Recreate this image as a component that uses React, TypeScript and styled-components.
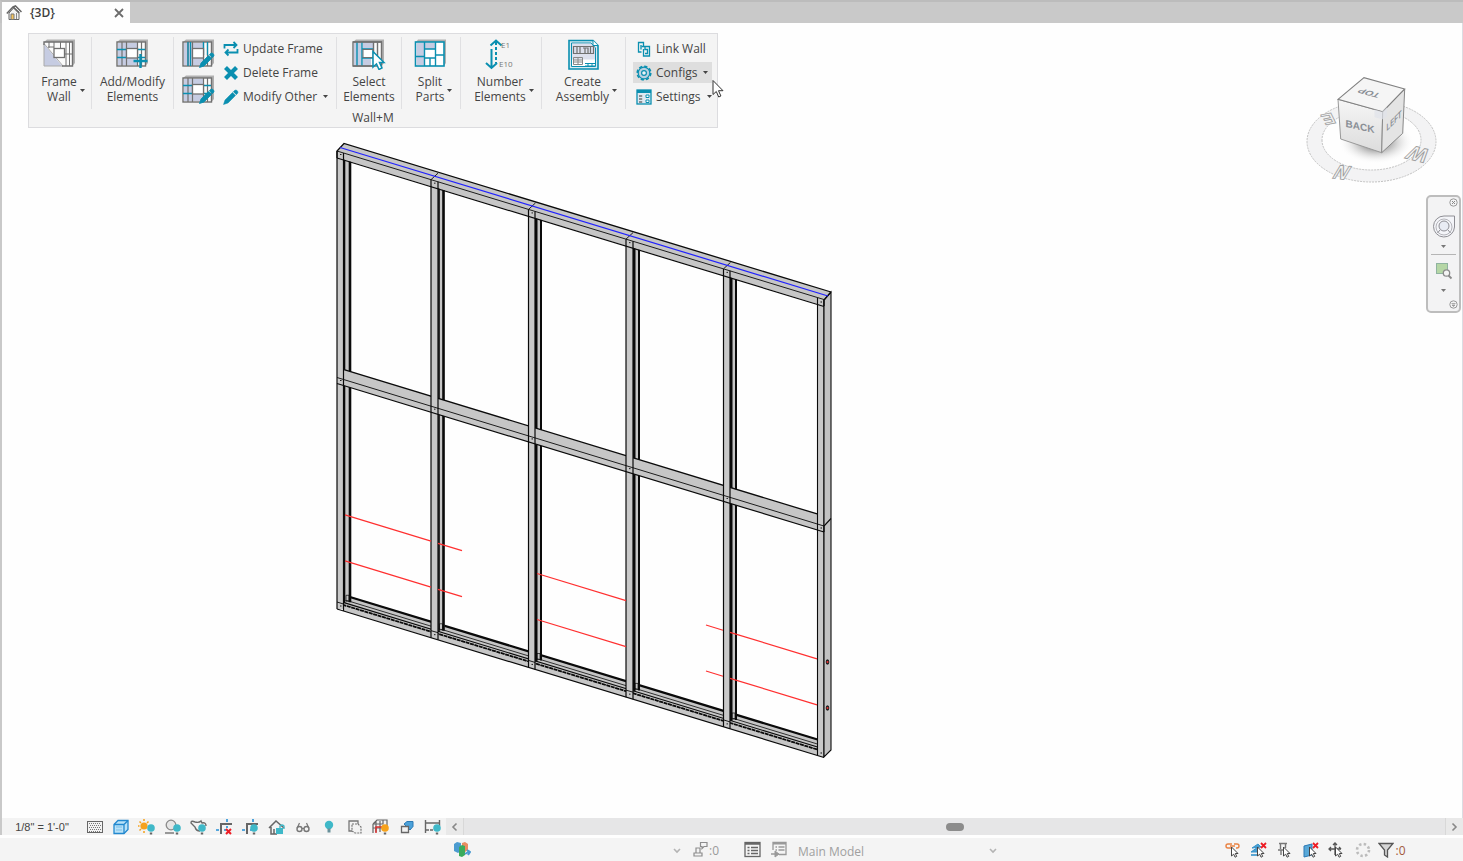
import React from 'react';
import styled, { createGlobalStyle } from 'styled-components';

const TEAL = '#0a8fb0';
const GREY = '#707070';
const LAV = '#c6cce2';

const GlobalStyle = createGlobalStyle`
  * { box-sizing: border-box; }
  body { margin: 0; background: #fefefe; font-family: "Open Sans", "Noto Sans", sans-serif; font-size: 12px; color: #444; }
  button, select { font: inherit; color: inherit; }
  svg { display: block; flex: none; }
`;

const Page = styled.div`
  display: grid;
  grid-template-rows: 23px 1fr 17px 26px;
  min-height: 100vh;
`;

const TabBar = styled.header`
  display: flex;
  background: #c9c9c9;
  border-top: 2px solid #bcbcbc;
  border-left: 2px solid #c4c4c4;
`;

const Tab = styled.div`
  display: flex;
  align-items: center;
  width: 128px;
  padding: 0 3px 0 4px;
  background: #fefefe;
  font-weight: 600;
  color: #404040;
`;

const TabName = styled.span`
  flex: 1;
  padding-left: 8px;
`;

const PlainButton = styled.button`
  display: flex;
  align-items: center;
  justify-content: center;
  padding: 0;
  border: 0;
  background: none;
`;

const CloseButton = styled(PlainButton)`
  width: 16px;
  height: 20px;
`;

const Workspace = styled.main`
  display: flex;
  justify-content: space-between;
  align-items: flex-start;
  border-left: 2px solid #c9c9c9;
  border-right: 1px solid #dcdce2;
`;

const ModelColumn = styled.section`
  padding: 10px 0 0 26px;
`;

const Ribbon = styled.section`
  width: 690px;
  height: 95px;
  border: 1px solid #dcdcdf;
  background: #f4f4f4;
`;

const RibbonRow = styled.div`
  display: flex;
  height: 72px;
  margin-top: 3px;
`;

const Group = styled.div<{ $w: number; $start?: number }>`
  display: flex;
  justify-content: ${p => (p.$start ? 'flex-start' : 'center')};
  width: ${p => p.$w}px;
  padding-left: ${p => p.$start ?? 0}px;
  border-right: 1px solid #e0e0e2;
  &:last-child { border-right: 0; }
`;

const BigButton = styled.button`
  display: flex;
  flex-direction: column;
  align-items: center;
  width: 100%;
  padding: 2px 0 0;
  border: 0;
  background: none;
  line-height: 15px;
  text-align: center;
`;

const BigLabel = styled.span<{ $menu?: boolean }>`
  display: flex;
  align-items: flex-end;
  gap: 3px;
  margin-top: 4px;
  padding-left: ${p => (p.$menu ? 6 : 0)}px;
  white-space: nowrap;
`;

const BigCaret = styled.span`
  padding-bottom: 12px;
`;

const RibbonTitle = styled.h2`
  margin: 0;
  font-size: 12px;
  font-weight: 400;
  line-height: 18px;
  text-align: center;
`;

const EditColumn = styled.div`
  display: flex;
  flex-direction: column;
  gap: 5px;
  padding: 2px 4px 0 0;
`;

const SmallColumn = styled.div`
  display: flex;
  flex-direction: column;
  align-items: flex-start;
  gap: 3px;
  padding-top: 1px;
`;

const SmallButton = styled.button<{ $active?: boolean }>`
  position: relative;
  display: flex;
  align-items: center;
  gap: 4px;
  height: 21px;
  padding: 0 4px 0 3px;
  border: 0;
  background: ${p => (p.$active ? '#dedede' : 'none')};
  white-space: nowrap;
`;

const SmallLabel = styled.span`
  padding-right: 2px;
`;

const Pointer = styled.svg`
  position: absolute;
  left: 79px;
  top: 17px;
`;

const Drawing = styled.svg`
  margin-left: 302px;
`;

const ViewTools = styled.aside`
  display: flex;
  flex-direction: column;
  align-items: flex-end;
  padding: 47px 1px 0 0;
`;

const CubeBox = styled.div`
  padding-right: 16px;
`;

const NavBar = styled.nav`
  display: flex;
  flex-direction: column;
  align-items: center;
  width: 35px;
  height: 118px;
  margin-top: 5px;
  border: 2px solid #bdbdbd;
  border-radius: 5px;
  background: #f3f3f4;
`;

const NavCorner = styled(PlainButton)`
  align-self: flex-end;
  padding: 1px 1px 0;
`;

const NavWheel = styled(PlainButton)`
  margin-top: 8px;
`;

const NavArrow = styled(PlainButton)`
  height: 15px;
`;

const NavRule = styled.div`
  width: 25px;
  height: 1px;
  background: #b5b5b5;
`;

const NavZoom = styled(PlainButton)`
  margin: 7px 0 3px;
`;

const NavFooter = styled(NavCorner)`
  margin-top: auto;
  margin-bottom: 2px;
`;

const ViewBar = styled.div`
  display: flex;
  align-items: stretch;
  height: 17px;
  background: #f3f3f3;
  border-left: 2px solid #c9c9c9;
`;

const ScaleButton = styled(PlainButton)`
  width: 80px;
  font-family: "Liberation Sans", sans-serif;
  font-size: 11px;
`;

const ViewButton = styled(PlainButton)`
  width: 26px;
`;

const ScrollArrow = styled(PlainButton)`
  width: 17px;
  background: #e9e9e9;
`;

const ScrollTrack = styled.div`
  display: flex;
  flex: 1;
  align-items: center;
  background: #e6e6e7;
  border: solid #d8d8d8;
  border-width: 0 1px;
`;

const ScrollSpace = styled.div`
  flex: 1 0 0;
`;

const ScrollThumb = styled.div`
  width: 18px;
  height: 8px;
  border-radius: 4px;
  background: #8c8c8c;
`;

const StatusBar = styled.footer`
  display: flex;
  align-items: center;
  border-top: 3px solid #fefefe;
  background: #f4f4f4;
  color: #9a9a9a;
`;

const StatusLead = styled.div`
  flex: 0 1 453px;
`;

const SelectBox = styled.div<{ $w: number; $inset?: number }>`
  display: flex;
  align-items: center;
  width: ${p => p.$w}px;
  padding: 2px 0 0 ${p => p.$inset ?? 0}px;
`;

const Select = styled.select`
  flex: 1;
  min-width: 0;
  height: 20px;
  padding: 2px 0 0;
  border: 0;
  background: transparent;
  appearance: none;
  color: #a0a0a0;
`;

const CountButton = styled(PlainButton)<{ $w: number }>`
  width: ${p => p.$w}px;
  gap: 1px;
`;

const CountText = styled.span`
  padding-top: 2px;
`;

const RequestCount = styled(CountButton)`
  margin-right: 8px;
`;

const StatusButton = styled(PlainButton)`
  width: 26px;
`;

const RightTools = styled.div`
  display: flex;
  margin-left: auto;
  padding-right: 55px;
  color: #a25a3c;
`;

const Caret = ({ fill = '#444' }: { fill?: string }) => (
  <svg width="5" height="3" viewBox="0 0 5 3"><path d="M0 0h5L2.5 3z" fill={fill} /></svg>
);

const Chevron = () => (
  <svg width="8" height="6" viewBox="0 0 8 6"><path d="M1 1l3 3 3-3" fill="none" stroke="#b4b4b4" strokeWidth="1.6" /></svg>
);

/* ---------- ribbon icons ---------- */

const Slab = ({ stroke = GREY }: { stroke?: string }) => (
  <>
    <path d="M1 3L4 .5H32V24L29.500 27V3z" fill="#b0b0b0" />
    <rect x="1" y="3" width="28.500" height="24" fill="#fbfbfb" stroke={stroke} strokeWidth="1.400" />
  </>
);

const PENCIL_PATH = 'M.5 15.500L2 11l7.500-7.500 3 3L5 14zM10.300 2.700l1.200-1.200q1.400-1 2.500 0l.5.600q1 1.200 0 2.400l-1.200 1.200z';

const FrameWallIcon = () => (
  <svg width="34" height="31" viewBox="0 0 34 31">
    <path d="M1 3L4 .5H32V24L29.500 27V3z" fill="#b0b0b0" />
    <path d="M1 3h28.500v24H1z" fill="#fbfbfb" />
    <path d="M6 3v6M11 3v6M17.500 3v6M23 3v24M26.500 3v24M5 8h6M21 15h8" stroke={GREY} fill="none" />
    <path d="M1 5v22h18z" fill={LAV} />
    <path d="M1 4.500L20 27M1 5v22h19" stroke="#aaa" fill="none" />
    <path d="M1 6V3H29.500V27H19" fill="none" stroke={GREY} strokeWidth="1.400" />
    <rect x="11" y="9.500" width="10.500" height="9" fill="#fff" stroke={GREY} strokeWidth="1.300" />
  </svg>
);

const GridBody = ({ line, horizontal }: { line: string; horizontal: boolean }) => (
  <>
    <Slab />
    <path d="M2 4h9v22H2zM11 4h10v6H11zM11 19h10v7H11z" fill={LAV} />
    <path d="M6 3v24M10.500 3v24M21.500 3v24M25.500 3v24" stroke={GREY} strokeWidth="1.200" />
    {horizontal
      ? <path d="M1 10.500h9M1 18.500h9M22 10.500h7M22 18.500h7" stroke={line} strokeWidth="1.300" />
      : <path d="M6 3v24M8.500 3v24M21.500 3v13M25.500 3v13" stroke={line} strokeWidth="1.300" />}
    <rect x="10.500" y="9.500" width="11" height="9.500" fill="#fff" stroke={GREY} strokeWidth="1.300" />
  </>
);

const AddModifyIcon = () => (
  <svg width="34" height="31" viewBox="0 0 34 31">
    <GridBody line={TEAL} horizontal />
    <path d="M24.500 15v14M17.500 22h14" stroke={TEAL} strokeWidth="2.400" />
  </svg>
);

const EditGridIcon = ({ horizontal }: { horizontal: boolean }) => (
  <svg width="34" height="31" viewBox="0 0 34 31">
    <GridBody line={TEAL} horizontal={horizontal} />
    <path d={PENCIL_PATH} transform="translate(17 13)" fill={TEAL} stroke={TEAL} strokeWidth=".8" />
  </svg>
);

const SelectIcon = () => (
  <svg width="34" height="31" viewBox="0 0 34 31">
    <Slab />
    <path d="M2 4h8v22H2zM11 19h8v7h-8zM11 4h10v6H11z" fill={LAV} />
    <path d="M5 3v24M10 3v24M10 10h11M10 19h11" stroke={TEAL} strokeWidth="1.400" fill="none" />
    <path d="M21.500 3v24M25.500 3v20M1 3h29M1 27h20" stroke={GREY} strokeWidth="1.400" fill="none" />
    <rect x="11" y="10.500" width="10" height="8" fill="#fff" stroke={GREY} />
    <path d="M21 12.500v15.500l3.500-3 2.500 5.500 3-1.500-2.500-5.500h4.500z" fill="#fff" stroke={TEAL} strokeWidth="1.500" />
  </svg>
);

const SplitIcon = () => (
  <svg width="34" height="31" viewBox="0 0 34 31">
    <path d="M2 3L4 .5H32V24L30 27z" fill="#b0b0b0" />
    <rect x="1.500" y="3" width="28.500" height="24" fill="#fff" stroke={TEAL} strokeWidth="1.600" />
    <path d="M2.500 4h8v22h-8zM11 4h10v6H11z" fill={LAV} />
    <path d="M10.500 3v24M21.500 3v24M1.500 17.500h9M10.500 10h11v9h-11M16 19v8M21.500 16H30" stroke={TEAL} strokeWidth="1.400" fill="none" />
  </svg>
);

const NumberIcon = () => (
  <svg width="34" height="31" viewBox="0 0 34 31">
    <path d="M7.500 10v18M2 24l5.500 5 5.500-5M6.500 6.500L12 1.500l5.500 5M12 2v4" fill="none" stroke={TEAL} strokeWidth="2" />
    <path d="M12 8v16" stroke={TEAL} strokeWidth="2" strokeDasharray="3 2" />
    <text x="17" y="9" fontSize="8" fill="#777">E1</text>
    <text x="15" y="28" fontSize="8" fill="#777">E10</text>
  </svg>
);

const AssemblyIcon = () => (
  <svg width="34" height="31" viewBox="0 0 34 31">
    <path d="M2 1.500h24l5 5v23.500H2z" fill="#d9eaf1" stroke={TEAL} strokeWidth="1.600" />
    <path d="M4.500 4h19.500l4.500 5v18.500h-24z" fill="#fff" stroke={TEAL} />
    <path d="M5 4.500h19l4 4v12H5z" fill={LAV} opacity=".6" />
    <path d="M26 1.500v5h5" fill="#fff" stroke={TEAL} />
    <path d="M6.500 7.500h20v7h-20zM10 7.500v7M13 7.500v7M16 9h5v5M18 9v5M23.500 7.500v7" fill="none" stroke={GREY} strokeWidth="1.200" />
    <path d="M6.500 18.500h9v7h-9zM6.500 21h9M6.500 23h9M11 18.500v7" fill="none" stroke="#888" />
    <path d="M18 24.500h10M18 27h10M21 24v3M25 24v3" stroke={TEAL} />
  </svg>
);

const UpdateIcon = () => (
  <svg width="16" height="16" viewBox="0 0 16 16">
    <path d="M1.500 7.500V4h12M10.500 1l3 3-3 3M14.500 8v3.500h-12M5.500 8.500l-3 3 3 3" fill="none" stroke={TEAL} strokeWidth="1.800" />
  </svg>
);
const DeleteIcon = () => (
  <svg width="16" height="16" viewBox="0 0 16 16">
    <path d="M2.500 2.500l11 11M13.500 2.500l-11 11" stroke={TEAL} strokeWidth="4.200" />
  </svg>
);
const PencilIcon = () => (
  <svg width="16" height="16" viewBox="0 0 16 16"><path d={PENCIL_PATH} fill={TEAL} stroke={TEAL} strokeWidth=".5" /></svg>
);
const LinkIcon = () => (
  <svg width="16" height="16" viewBox="0 0 16 16">
    <path d="M7.500 6V1.500H2.500v9.500h3M5 8.500V4" fill="none" stroke={TEAL} strokeWidth="1.300" />
    <path d="M5.500 5.500h3.500v3h2.500v4H9M7.500 12v-4M9 5.500h4.500V15H7.500v-3" fill="none" stroke={TEAL} strokeWidth="1.300" />
  </svg>
);
const GearIcon = () => (
  <svg width="16" height="16" viewBox="0 0 16 16">
    <circle cx="8" cy="8" r="6.800" fill="none" stroke={TEAL} strokeWidth="1.600" strokeDasharray="3.300 2.040" />
    <circle cx="8" cy="8" r="5.800" fill="#b9d0e0" stroke={TEAL} strokeWidth="1.200" />
    <circle cx="8" cy="8" r="2.400" fill="#eef2f7" stroke={TEAL} strokeWidth="1.200" />
  </svg>
);
const SettingsIcon = () => (
  <svg width="16" height="16" viewBox="0 0 16 16">
    <rect x="1" y="1" width="14" height="14" fill="#dfe8f1" stroke={TEAL} strokeWidth="1.300" />
    <path d="M1 2.500h14" stroke={TEAL} strokeWidth="3" />
    <path d="M3 7h4M3 10h4M3 13h4" stroke={GREY} strokeWidth="1.300" strokeDasharray="3 .8" />
    <path d="M10 6h3v2.500h-3zM10 11h3v2.500h-3z" fill="#fff" stroke={TEAL} />
  </svg>
);

/* ---------- model ---------- */

const SLOPE = 0.305;
const at = (x: number, base: number) => base + (x - 337) * SLOPE;
const run = (x1: number, x2: number, base: number) => `M${x1} ${at(x1, base)}L${x2} ${at(x2, base)}`;
const band = (x1: number, x2: number, top: number, bottom: number) =>
  `${x1},${at(x1, top)} ${x2},${at(x2, top)} ${x2},${at(x2, bottom)} ${x1},${at(x1, bottom)}`;

const STUDS = [
  { x: 337, w: 6.5, inner: 351 },
  { x: 431, w: 7, inner: 444.5 },
  { x: 528.5, w: 6.5, inner: 542 },
  { x: 626, w: 7, inner: 640 },
  { x: 723.5, w: 6.5, inner: 737 },
];
const RED = [
  [345, 431, 512.5], [438, 462, 512.5], [345, 431, 558.500], [438, 462, 558.500],
  [537, 626, 512.5], [537, 626, 558.500],
  [706, 723, 512.5], [730, 817, 512.5], [706, 723, 558.500], [730, 817, 558.500],
];

const WallModel = () => (
  <Drawing width="504" height="636" viewBox="330 128 504 636" role="img" aria-label="Framed wall model">
    <g stroke="#0a0a0a" strokeWidth="1.100" fill="none">
      <polygon points={band(343, 824, 592.5, 609)} fill="#c6c6c6" stroke="none" />
      <path d={run(345, 820, 593)} strokeWidth="2.200" />
      <path d={run(345, 820, 597.5)} strokeWidth=".8" />
      <path d={run(344, 820, 600.5)} />
      <path d={run(338, 824, 603)} strokeWidth="1.800" strokeDasharray="4 .6" />
      {STUDS.map(s => (
        <g key={s.x}>
          <rect x={s.x + s.w} y={at(s.x, 156)} width={s.inner - s.x - s.w} height={444} fill="#c6c6c6" stroke="none" />
          <path d={`M${s.inner - 1} ${at(s.inner, 157)}V${at(s.inner, 598)}`} strokeWidth={s.x < 500 ? 2.6 : 2} />
          <path d={`M${s.x + s.w + 1} ${at(s.x, 158)}V${at(s.x, 603)}`} strokeWidth={s.x < 500 ? 1.6 : 3} />
          <path d={`M${s.inner - 5} ${at(s.inner, 591)}h3v6h-3z`} strokeWidth=".7" />
        </g>
      ))}
      <polygon points={band(343, 818, 367.500, 383.500)} fill="#c6c6c6" stroke="none" />
      <path d={run(344, 818, 367.500)} strokeWidth="1.300" />
      <polygon points="337,151 344,143.500 831,292 831,299 824,306 337,157.500" fill="#c6c6c6" stroke="none" />
      {STUDS.map(s => (
        <g key={s.x}>
          <rect x={s.x} y={at(s.x, 152)} width={s.w} height={457} fill="#c9c9c9" stroke="none" />
          <path d={`M${s.x} ${at(s.x, 151)}V${at(s.x, 609)}M${s.x + s.w} ${at(s.x + s.w, 151)}V${at(s.x + s.w, 609)}`} strokeWidth="1.200" />
        </g>
      ))}
      <rect x="817.500" y="299" width="6.500" height="457" fill="#c9c9c9" stroke="none" />
      <path d="M817.500 298V755M824 300V757" />
      <polygon points="824,300 831,292 831,750 824,757" fill="#c2c2c2" />
      <path d={run(337, 824, 151)} strokeWidth=".9" />
      <path d={run(337, 824, 158)} strokeWidth="1.200" />
      <path d="M337 158V151L344 143.500L831 292" strokeWidth="1.300" />
      <path d="M824 306V300L831 292" strokeWidth="1.300" />
      <path d={run(337, 824, 377.500)} strokeWidth=".9" />
      <path d={run(337, 824, 383.500)} strokeWidth="1.200" />
      <path d="M824 532V526L831 518.500" />
      <path d={run(337, 824, 609)} strokeWidth="1.200" />
      {STUDS.map(s => (
        <g key={s.x} strokeWidth=".9">
          {s.x > 340 && <path d={`M${s.x} ${at(s.x, 151)}l7 -6.500`} />}
          <path d={`M${s.x + 3} ${at(s.x, 154.500)}h1.500M${s.x + 3} ${at(s.x, 380.500)}h1.500M${s.x + 3} ${at(s.x, 606)}h1.500`} />
          <path d={`M${s.x} ${at(s.x, 602)}l${s.w} 2`} />
        </g>
      ))}
      <path d="M820.500 302h1.500M820.500 528h1.500M820.500 753h1.500" />
    </g>
    <path d="M340 147.500L828 296" stroke="#2020ff" strokeWidth="1.200" />
    <g stroke="#ff3030" strokeWidth="1.200">
      {RED.map(([a, b, base]) => <path key={`${a}-${base}`} d={run(a, b, base)} />)}
    </g>
    {[662, 708].map(y => (
      <g key={y}>
        <ellipse cx="827.500" cy={y} rx="1.800" ry="2.800" fill="#222" />
        <circle cx="827.500" cy={y} r="1" fill="#e33" />
      </g>
    ))}
  </Drawing>
);

const ViewCube = () => (
  <svg width="145" height="120" viewBox="0 0 145 120" role="img" aria-label="View cube">
    <defs>
      <radialGradient id="shade"><stop offset=".3" stopColor="#999" /><stop offset="1" stopColor="#fff" stopOpacity="0" /></radialGradient>
      <linearGradient id="face" x2="0" y2="1"><stop offset="0" stopColor="#f6f6f6" /><stop offset="1" stopColor="#dcdcdc" /></linearGradient>
    </defs>
    <path fillRule="evenodd" fill="#f3f3f4" stroke="#c2c2c2" strokeDasharray="2 1" d="M7 71.500a64.500 40.500 0 1 0 129 0a64.500 40.500 0 1 0-129 0zM22 70a49.500 30 0 1 0 99 0a49.500 30 0 1 0-99 0z" />
    <ellipse cx="76" cy="72" rx="38" ry="22" fill="url(#shade)" />
    <polygon points="38,29.300 82.700,41.700 81.700,82.700 40.700,69" fill="url(#face)" stroke="#999" />
    <polygon points="82.700,41.700 104.700,19 102.700,63.300 81.700,82.700" fill="#e4e4e4" stroke="#888" />
    <polygon points="38,29.300 64,7.700 104.700,19 82.700,41.700" fill="#f5f5f5" stroke="#808080" strokeWidth="1.100" />
    <path d="M74.500 39.500l7.500 2.200 5-4.500v9l-4.500 3-8-2z" fill="#dfe3ea" opacity=".7" />
    <g fontFamily="Liberation Sans Narrow, Liberation Sans, sans-serif" fontWeight="700" fill="#8a8f96" textAnchor="middle">
      <text transform="matrix(1 .22 0 1 60 60)" fontSize="10">BACK</text>
      <text transform="matrix(.6 -.6 0 1 94 54)" fontSize="10">LEFT</text>
      <text transform="matrix(-1 -.28 .6 -.6 71 21)" fontSize="10">TOP</text>
    </g>
    <g fontFamily="Liberation Sans, sans-serif" fontWeight="700" fill="#f4f4f4" stroke="#a0a0a0" strokeWidth=".9" textAnchor="middle">
      <text transform="matrix(1 .1 -.6 1 38 109)" fontSize="19">N</text>
      <text transform="matrix(-1 -.25 .6 -.9 122 78)" fontSize="20">W</text>
      <text transform="matrix(-1 .2 -.4 -.8 26 44)" fontSize="18">E</text>
    </g>
  </svg>
);

/* ---------- small bottom icons ---------- */

const Bulb = ({ fill = '#3fb8c8', x = 12, y = 9 }: { fill?: string; x?: number; y?: number }) => (
  <><circle cx={x} cy={y} r="3.800" fill={fill} /><path d={`M${x - 1.200} ${y + 4.500}h2.400v2h-2.400z`} fill="#666" /></>
);

const Small = ({ children }: { children: React.ReactNode }) => (
  <svg width="18" height="16" viewBox="0 0 18 16" fill="none">{children}</svg>
);

const CursorMark = () => (
  <path d="M7.500 5v9l2.200-1.800 1.400 3 1.600-.8-1.400-2.900h2.700z" fill="#fff" stroke="#444" />
);

const CropCorner = () => (
  <><path d="M5 15V5h11" stroke="#666" strokeWidth="2" /><path d="M0 11h3M11 0v3M8 11h2M11 7v2" stroke="#238fd6" strokeWidth="1.600" /></>
);

const viewIcons: [string, React.ReactNode][] = [
  ['Detail level', <Small><rect x="1.500" y="2.500" width="15" height="11" stroke="#666" /><path d="M3 4.500h12M3 8.500h12M3 12.500h12" stroke="#777" strokeDasharray="1 1" /><path d="M4 6.500h12M4 10.500h12" stroke="#777" strokeDasharray="1 1" /></Small>],
  ['Visual style', <Small><path d="M2 5.500L6 1.500h10v9l-4 4H2z" fill="#b9e2f8" stroke="#2389cf" strokeWidth="1.300" /><path d="M2 5.500h10v9M12 5.500l4-4" stroke="#2389cf" strokeWidth="1.300" /><path d="M4 8h6M4 11h6" stroke="#7abfe8" /></Small>],
  ['Sun path', <Small><circle cx="6" cy="7" r="3.600" fill="#f6a21c" /><path d="M6 0v2M6 12v2M0 7h1.500M1.500 2.500l1.500 1.500M1.500 11.500L3 10M10.500 2.500L9 4" stroke="#f6a21c" strokeWidth="1.500" /><Bulb x={13} /></Small>],
  ['Shadows', <Small><circle cx="7" cy="6" r="4.800" fill="#e5e5e5" stroke="#8a8a8a" strokeWidth="1.300" /><path d="M1 14h9" stroke="#999" strokeWidth="2" /><Bulb x={13} /></Small>],
  ['Rendering', <Small><path d="M5 3q4 1 6-1l1 2q4-1 4 3M5 3Q1 1 1 4l4 4q1 4 5 4" stroke="#6a6a6a" strokeWidth="1.400" /><Bulb x={12} /></Small>],
  ['Crop view', <Small><CropCorner /><path d="M10 10l5 5M15 10l-5 5" stroke="#ed1c24" strokeWidth="2" /></Small>],
  ['Show crop region', <Small><CropCorner /><Bulb x={12} /></Small>],
  ['Unlock 3D view', <Small><path d="M1 9l7-7 8 7M3 8v7h6M6 15v-5" stroke="#666" strokeWidth="1.500" /><rect x="8" y="9" width="7" height="6" fill="#3fb8c8" /><path d="M12 9V7q2-2 4 0v3" stroke="#3fb8c8" strokeWidth="1.300" /></Small>],
  ['Temporary hide', <Small><circle cx="5.500" cy="10" r="2.500" stroke="#777" strokeWidth="1.400" /><circle cx="12.500" cy="10" r="2.500" stroke="#777" strokeWidth="1.400" /><path d="M3.200 9l2.300-5M14.800 9l-2.300-5M8 9.500h2" stroke="#777" strokeWidth="1.200" /></Small>],
  ['Reveal hidden', <Small><circle cx="9" cy="6" r="4.200" fill="#3fb8c8" /><path d="M7.500 9.500h3v4h-3z" fill="#68909a" /></Small>],
  ['Temporary view', <Small><path d="M6 12H3V2h9v3" stroke="#777" strokeWidth="1.300" /><path d="M6 5h6l3 3v6H9L6 12z" stroke="#777" strokeWidth="1.200" strokeDasharray="2 1" /></Small>],
  ['Analytical model', <Small><path d="M1 5l4-4h10v8M1 5h10V1M1 5v9M4 2v11M8 2v11M1 9h13" stroke="#666" strokeWidth="1.200" /><path d="M4 14V8h6" stroke="#db3030" strokeWidth="1.500" /><Bulb x={13} y={9} fill="#f6a21c" /></Small>],
  ['Displacement', <Small><path d="M6 5l3-2.500h6v5L12 11z" fill="#4aa1da" stroke="#2c79b4" /><path d="M3.500 7.500h7v6h-7z" fill="#f2f2f2" stroke="#666" strokeWidth="1.300" /></Small>],
  ['Constraints', <Small><path d="M1.500 1v13M15.500 1v6M2 4h13" stroke="#666" strokeWidth="1.400" /><path d="M2 11h8" stroke="#666" strokeWidth="1.300" strokeDasharray="3 1" /><Bulb x={13} y={9} /></Small>],
];

const statusIcons: [string, React.ReactNode][] = [
  ['Select links', <Small><path d="M7 6H4a2 2 0 0 1 0-4h4M10 2h3a2 2 0 0 1 0 4h-1M6 4h5" stroke="#e98243" strokeWidth="1.400" /><CursorMark /></Small>],
  ['Select underlay', <Small><path d="M2 6l6-4 3 3zM1 10l7-5v5z" fill="#4a9fd2" stroke="#3493cb" /><path d="M1 13h7" stroke="#3493cb" strokeWidth="1.600" /><path d="M11 1l5 5M16 1l-5 5" stroke="#ed1c24" strokeWidth="1.800" /><CursorMark /></Small>],
  ['Select pinned', <Small><path d="M3 1.500h8M4.500 2v5M9.500 2v4M2 8h6M5 8v5" stroke="#777" strokeWidth="1.400" /><CursorMark /></Small>],
  ['Select by face', <Small><path d="M2 4l8-2v11l-8 2z" fill="#58a8d8" stroke="#2c79b4" /><path d="M11 1l5 5M16 1l-5 5" stroke="#ed1c24" strokeWidth="1.800" /><CursorMark /></Small>],
  ['Drag on selection', <Small><path d="M7 1v12M1 7h12M5 3l2-2 2 2M3 5L1 7l2 2M11 5l2 2" stroke="#555" strokeWidth="1.300" /><CursorMark /></Small>],
  ['Background processes', <Small><circle cx="9" cy="8" r="6" stroke="#bcbcbc" strokeWidth="2.600" strokeDasharray="2.400 2.310" /></Small>],
];

const BigAction = ({ icon, lines, menu }: { icon: React.ReactNode; lines: [string, string]; menu?: boolean }) => (
  <BigButton type="button">
    {icon}
    <BigLabel $menu={menu}>
      <span>{lines[0]}<br />{lines[1]}</span>
      {menu && <BigCaret><Caret /></BigCaret>}
    </BigLabel>
  </BigButton>
);

const SmallAction = ({ icon, label, menu, active, children }: {
  icon: React.ReactNode; label: string; menu?: boolean; active?: boolean; children?: React.ReactNode;
}) => (
  <SmallButton type="button" $active={active}>
    {icon}<SmallLabel>{label}</SmallLabel>{menu && <Caret />}{children}
  </SmallButton>
);

export default function App() {
  return (
    <>
      <GlobalStyle />
      <Page>
        <TabBar>
          <Tab>
            <svg width="16" height="16" viewBox="0 0 16 16">
              <path d="M3 8v6.500h10V7L8 2.500z" fill="#f2f2f2" stroke="#666" />
              <path d="M.8 8.500L7 2l2.500-1L15.500 7M7 2l6 6" fill="none" stroke="#666" strokeWidth="1.500" />
              <path d="M5 9h3v5.500H5z" fill="#f5c45c" stroke="#777" />
              <path d="M10.500 8v6" stroke="#888" />
            </svg>
            <TabName>{'{3D}'}</TabName>
            <CloseButton type="button" aria-label="Close tab">
              <svg width="10" height="10" viewBox="0 0 10 10"><path d="M1 1l8 8M9 1L1 9" stroke="#6c6c6c" strokeWidth="1.800" /></svg>
            </CloseButton>
          </Tab>
        </TabBar>

        <Workspace>
          <ModelColumn>
            <Ribbon>
              <RibbonRow>
                <Group $w={63}><BigAction icon={<FrameWallIcon />} lines={['Frame', 'Wall']} menu /></Group>
                <Group $w={82}><BigAction icon={<AddModifyIcon />} lines={['Add/Modify', 'Elements']} /></Group>
                <Group $w={163} $start={8}>
                  <EditColumn>
                    <PlainButton type="button" aria-label="Edit vertical framing"><EditGridIcon horizontal={false} /></PlainButton>
                    <PlainButton type="button" aria-label="Edit horizontal framing"><EditGridIcon horizontal /></PlainButton>
                  </EditColumn>
                  <SmallColumn>
                    <SmallAction icon={<UpdateIcon />} label="Update Frame" />
                    <SmallAction icon={<DeleteIcon />} label="Delete Frame" />
                    <SmallAction icon={<PencilIcon />} label="Modify Other" menu />
                  </SmallColumn>
                </Group>
                <Group $w={65}><BigAction icon={<SelectIcon />} lines={['Select', 'Elements']} /></Group>
                <Group $w={59}><BigAction icon={<SplitIcon />} lines={['Split', 'Parts']} menu /></Group>
                <Group $w={81}><BigAction icon={<NumberIcon />} lines={['Number', 'Elements']} menu /></Group>
                <Group $w={84}><BigAction icon={<AssemblyIcon />} lines={['Create', 'Assembly']} menu /></Group>
                <Group $w={91} $start={7}>
                  <SmallColumn>
                    <SmallAction icon={<LinkIcon />} label="Link Wall" />
                    <SmallAction icon={<GearIcon />} label="Configs" menu active>
                      <Pointer width="12" height="20" viewBox="0 0 12 20">
                        <path d="M1 1.500v14l3.300-3 2.400 5.500 2.200-1-2.400-5.300h4.500z" fill="#fff" stroke="#333" />
                      </Pointer>
                    </SmallAction>
                    <SmallAction icon={<SettingsIcon />} label="Settings" menu />
                  </SmallColumn>
                </Group>
              </RibbonRow>
              <RibbonTitle>Wall+M</RibbonTitle>
            </Ribbon>
            <WallModel />
          </ModelColumn>

          <ViewTools>
            <CubeBox><ViewCube /></CubeBox>
            <NavBar aria-label="Navigation bar">
              <NavCorner type="button" aria-label="Close navigation bar">
                <svg width="9" height="9" viewBox="0 0 9 9"><circle cx="4.500" cy="4.500" r="3.700" fill="none" stroke="#999" /><path d="M3 3l3 3M6 3L3 6" stroke="#888" /></svg>
              </NavCorner>
              <NavWheel type="button" aria-label="Steering wheel">
                <svg width="24" height="24" viewBox="0 0 24 24" fill="#f4f5f9" stroke="#8e8e94">
                  <path d="M12 1h10.500v11A10.500 10.500 0 1 1 12 1z" /><circle cx="12" cy="12" r="8" stroke="#b4b4ba" /><circle cx="12" cy="11" r="5" fill="#e9ecf4" /><path d="M8 15l-2.500 3M16 15l2.500 3" />
                </svg>
              </NavWheel>
              <NavArrow type="button" aria-label="Wheel options"><Caret fill="#777" /></NavArrow>
              <NavRule />
              <NavZoom type="button" aria-label="Zoom region">
                <svg width="18" height="18" viewBox="0 0 18 18"><rect x="1.500" y="1.500" width="11" height="10" fill="#b5d6a5" stroke="#8fb3a0" /><circle cx="11.500" cy="11" r="3.200" fill="#f4f4f4" stroke="#8a8a8a" strokeWidth="1.300" /><path d="M13.500 13.500l3 3" stroke="#8a8a8a" strokeWidth="1.800" /></svg>
              </NavZoom>
              <NavArrow type="button" aria-label="Zoom options"><Caret fill="#777" /></NavArrow>
              <NavFooter type="button" aria-label="Customize">
                <svg width="9" height="9" viewBox="0 0 9 9"><circle cx="4.500" cy="4.500" r="3.700" fill="none" stroke="#999" /><path d="M2.500 3.500h4M3 5h3l-1.500 1.500z" stroke="#999" fill="#999" strokeWidth=".8" /></svg>
              </NavFooter>
            </NavBar>
          </ViewTools>
        </Workspace>

        <ViewBar>
          <ScaleButton type="button">1/8" = 1'-0"</ScaleButton>
          {viewIcons.map(([name, icon]) => <ViewButton key={name} type="button" aria-label={name}>{icon}</ViewButton>)}
          <ScrollArrow type="button" aria-label="Scroll left">
            <svg width="7" height="10" viewBox="0 0 7 10"><path d="M5.500 1.500L2 5l3.500 3.500" fill="none" stroke="#888" strokeWidth="1.600" /></svg>
          </ScrollArrow>
          <ScrollTrack><ScrollSpace /><ScrollThumb /><ScrollSpace /></ScrollTrack>
          <ScrollArrow type="button" aria-label="Scroll right">
            <svg width="7" height="10" viewBox="0 0 7 10"><path d="M1.500 1.500L5 5 1.500 8.500" fill="none" stroke="#888" strokeWidth="1.600" /></svg>
          </ScrollArrow>
        </ViewBar>

        <StatusBar>
          <StatusLead />
          <svg width="18" height="17" viewBox="0 0 18 17">
            <path d="M1 3l3-2 4 1v8l-3 2-4-2z" fill="#4b9bd0" /><path d="M9 2l3-1 3 2v6l-3 2-3-2z" fill="#e98d62" />
            <path d="M6 6l3-2 3 1v9l-3 2-3-1z" fill="#3aab5c" /><path d="M12 13l5-3M14 9l3 2-2 3" stroke="#4b9bd0" strokeWidth="2" fill="none" />
          </svg>
          <SelectBox $w={210}>
            <Select aria-label="Active workset" defaultValue=""><option value="" /></Select>
            <Chevron />
          </SelectBox>
          <RequestCount type="button" aria-label="Editing requests" $w={50}>
            <svg width="15" height="17" viewBox="0 0 15 17" fill="none" stroke="#8d8d8d" strokeWidth="1.200">
              <path d="M1 15v-3h8v3zM3 12V7h4v5M7.500 1.500h6.500v4H11l-2 2v-2H7.500z" />
            </svg>
            <CountText>:0</CountText>
          </RequestCount>
          <StatusButton type="button" aria-label="Design options">
            <svg width="17" height="17" viewBox="0 0 17 17" fill="none" stroke="#666"><rect x="1" y="1.500" width="15" height="14" strokeWidth="1.300" /><path d="M1 2.500h15" strokeWidth="2.500" /><path d="M3.500 6.500h2M3.500 9.500h2M3.500 12.500h2M7 6.500h7M7 9.500h7M7 12.500h7" strokeWidth="1.300" /></svg>
          </StatusButton>
          <StatusButton type="button" aria-label="Add to set">
            <svg width="17" height="17" viewBox="0 0 17 17" fill="none" stroke="#999"><path d="M3 9V1.500h13v12H9" strokeWidth="1.300" /><path d="M3 2.500h13" strokeWidth="2" /><path d="M5.500 6h1.500M8.500 6h6M5.500 9h1.500M8.500 9h6M1 13h6" strokeWidth="1.500" /><path d="M5 10l4 3-4 3z" fill="#999" /></svg>
          </StatusButton>
          <SelectBox $w={206} $inset={7}>
            <Select aria-label="Active design option" defaultValue="Main Model"><option>Main Model</option></Select>
            <Chevron />
          </SelectBox>
          <RightTools>
            {statusIcons.map(([name, icon]) => <StatusButton key={name} type="button" aria-label={name}>{icon}</StatusButton>)}
            <CountButton type="button" aria-label="Filter" $w={32}>
              <svg width="16" height="16" viewBox="0 0 16 16"><path d="M1 1.500h14L9.500 8v7l-3-2V8z" fill="#d5d5d5" stroke="#555" strokeWidth="1.300" /></svg>
              <CountText>:0</CountText>
            </CountButton>
          </RightTools>
        </StatusBar>
      </Page>
    </>
  );
}
